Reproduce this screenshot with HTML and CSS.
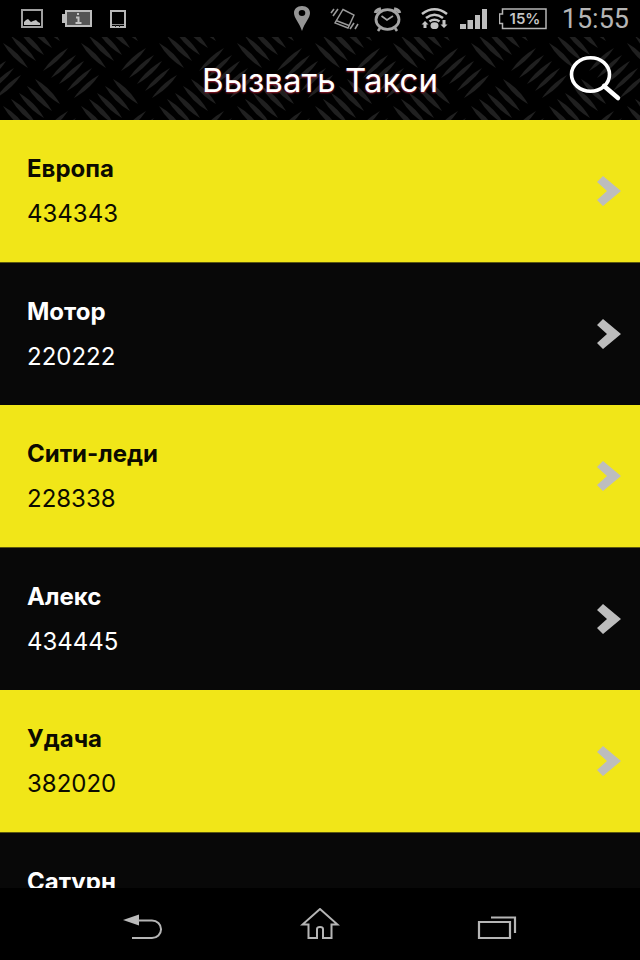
FILE: index.html
```html
<!DOCTYPE html>
<html lang="ru">
<head>
  <meta charset="UTF-8" />
  <meta name="viewport" content="width=device-width, initial-scale=1" />
  <title>Вызвать Такси</title>
  <link rel="stylesheet" href="styles.css">
</head>
<body>

  <div class="status-bar">
    <div class="status-left">
      <svg width="24" height="37" viewBox="0 0 24 37">
        <rect x="2" y="10" width="20" height="17" fill="none" stroke="#a0a0a0" stroke-width="2"/>
        <path d="M4 25v-3l2-2 2-1 3 3 2-1 3-1 2 2 2 1v2z" fill="#c0c0c0"/>
      </svg>
      <svg width="30" height="37" viewBox="0 0 30 37">
        <path d="M0 14h3v-4h27v17H3v-4H0z" fill="#bdbdbd"/>
        <rect x="5" y="12" width="23" height="13" fill="#555"/>
        <path d="M14 17.500h2.500V23M13.500 23h6M15 14h2" fill="none" stroke="#c4c4c4" stroke-width="2"/>
      </svg>
      <svg width="16" height="37" viewBox="0 0 16 37">
        <rect x="1" y="11" width="14" height="16" fill="none" stroke="#b8b8b8" stroke-width="2"/>
        <path d="M2 24.500h12" stroke="#8a8a8a" stroke-width="1"/>
        <path d="M5 26h1M9 26h1" stroke="#222" stroke-width="2"/>
      </svg>
    </div>
    <div class="status-right">
      <svg width="26" height="37" viewBox="0 0 26 37">
        <path fill-rule="evenodd" d="M10 6c5 0 8 3 8 7 0 5-5 9-8 18-3-9-8-13-8-18 0-4 3-7 8-7zm0 4a3.300 3 0 1 0 0 6 3.300 3 0 0 0 0-6z" fill="#959595"/>
      </svg>
      <svg width="31" height="37" viewBox="0 0 31 37" fill="none" stroke="#9a9a9a">
        <path d="M13 9.500l11 5.500-6 13-13-5z" stroke-width="1.400"/>
        <path d="M6 20.500l13 5" stroke-width="1.400"/>
        <path d="M1 13l3-4M3 16l5-7M20 29l4-6M25 29l3-5" stroke-width="1.600"/>
      </svg>
      <svg width="36" height="37" viewBox="0 0 36 37" fill="none" stroke="#a3a3a3">
        <ellipse cx="14.500" cy="19.500" rx="11.500" ry="9.800" stroke-width="2.800"/>
        <path d="M8.500 16l5.500 4 6-4" stroke-width="1.700"/>
        <path d="M2.500 13q.5-3 5.500-4M26.500 13q-.5-3-5.500-4" stroke-width="3.500"/>
        <path d="M7 28l-2 3M22 28l2 3" stroke-width="2.600"/>
      </svg>
      <svg width="27" height="37" viewBox="0 0 27 37" fill="none" stroke="#c4c4c4" stroke-width="2.600">
        <path d="M1 14q12.500-9.500 25 0M5 18q8.500-6.500 17 0M8.500 21.500q5-3.500 10 0"/>
        <ellipse cx="13.500" cy="25.700" rx="4" ry="3.400" fill="#c4c4c4" stroke="none"/>
        <path d="M4 21l3.500 3.500H5.500V28h-3v-3.500H.5zM23 28l-3.500-3.500h2V20h3v4.500h2z" fill="#c4c4c4" stroke="none"/>
      </svg>
      <svg width="27" height="37" viewBox="0 0 27 37" fill="#bdbdbd">
        <path d="M0 24h6v5H0zM7.500 20h5.500v9H7.500zM15 15h5v14h-5zM22 9h5v20h-5z"/>
      </svg>
      <svg width="49" height="37" viewBox="0 0 49 37">
        <path d="M3.500 9H47v19.500H3.500v-5H.5V14h3z" fill="none" stroke="#b5b5b5" stroke-width="1.500"/>
        <text class="battery-text" x="26" y="24" text-anchor="middle">15%</text>
      </svg>
      <span class="clock">15:55</span>
    </div>
  </div>

  <header class="header">
    <svg class="tread" width="100%" height="100%" aria-hidden="true">
      <defs>
        <path id="up" d="M0 0Q9 -14 25 -23Q16 -9 0 0z"/>
        <path id="down" d="M0 0Q16 9 25 25Q9 16 0 0z"/>
        <g id="plate">
          <use href="#up" x="43" y="34"/>
          <use href="#up" x="51" y="41"/>
          <use href="#up" x="59" y="47"/>
          <use href="#up" x="67" y="54"/>
          <use href="#up" x="74" y="61"/>
          <use href="#down" x="35" y="42"/>
          <use href="#down" x="27" y="49"/>
          <use href="#down" x="19" y="56"/>
          <use href="#down" x="11" y="62"/>
          <use href="#down" x="3" y="69"/>
        </g>
        <pattern id="metal" width="78" height="63" patternUnits="userSpaceOnUse">
          <use href="#plate"/>
          <use href="#plate" x="-78"/>
          <use href="#plate" y="-63"/>
          <use href="#plate" x="-78" y="-63"/>
        </pattern>
      </defs>
      <rect width="100%" height="100%" fill="url(#metal)"/>
    </svg>
    <h1>Вызвать Такси</h1>
    <button type="button" class="search" aria-label="Поиск">
      <svg width="54" height="48" viewBox="0 0 54 48" fill="none" stroke="#fff">
        <ellipse cx="22.500" cy="19.500" rx="19" ry="16.800" stroke-width="3.600"/>
        <path d="M36 31l14 12" stroke-width="4.500" stroke-linecap="round"/>
      </svg>
    </button>
  </header>

  <main class="list">
    <a class="row" href="tel:434343">
      <span class="info"><b>Европа</b><span>434343</span></span>
      <svg class="arrow" width="26" height="30" viewBox="0 0 26 30"><path d="M1 6L7 0l18 15L7 30l-6-6 10-9z"/></svg>
    </a>
    <a class="row dark" href="tel:220222">
      <span class="info"><b>Мотор</b><span>220222</span></span>
      <svg class="arrow" width="26" height="30" viewBox="0 0 26 30"><path d="M1 6L7 0l18 15L7 30l-6-6 10-9z"/></svg>
    </a>
    <a class="row" href="tel:228338">
      <span class="info"><b>Сити-леди</b><span>228338</span></span>
      <svg class="arrow" width="26" height="30" viewBox="0 0 26 30"><path d="M1 6L7 0l18 15L7 30l-6-6 10-9z"/></svg>
    </a>
    <a class="row dark" href="tel:434445">
      <span class="info"><b>Алекс</b><span>434445</span></span>
      <svg class="arrow" width="26" height="30" viewBox="0 0 26 30"><path d="M1 6L7 0l18 15L7 30l-6-6 10-9z"/></svg>
    </a>
    <a class="row" href="tel:382020">
      <span class="info"><b>Удача</b><span>382020</span></span>
      <svg class="arrow" width="26" height="30" viewBox="0 0 26 30"><path d="M1 6L7 0l18 15L7 30l-6-6 10-9z"/></svg>
    </a>
    <a class="row dark" href="#">
      <span class="info"><b>Сатурн</b></span>
    </a>
  </main>

  <nav class="nav-bar">
    <button type="button" aria-label="Назад">
      <svg width="40" height="32" viewBox="0 0 40 32">
        <path d="M0 12l16-5.500v11z" fill="#bbb"/>
        <path d="M15 12.500h14a9 8.700 0 0 1 0 17.500H9" fill="none" stroke="#b5b5b5" stroke-width="2"/>
      </svg>
    </button>
    <button type="button" aria-label="Домой">
      <svg width="40" height="32" viewBox="0 0 40 32">
        <path d="M20 1L2.500 16.500h6V30h8.500v-9q0-2 3-2t3 2v9h8.500V16.500h6z" fill="none" stroke="#b5b5b5" stroke-width="2"/>
      </svg>
    </button>
    <button type="button" aria-label="Недавние">
      <svg width="40" height="32" viewBox="0 0 40 32">
        <path d="M2 14h31v16H2zM14 9.500h24V25" fill="none" stroke="#b5b5b5" stroke-width="2.200"/>
      </svg>
    </button>
  </nav>

</body>
</html>
```
FILE: styles.css
```css
* {
  box-sizing: border-box;
}
body {
  margin: 0;
  height: 100vh;
  display: flex;
  flex-direction: column;
  background-color: #000;
  color: #fff;
  font-family: Inter, Roboto, sans-serif;
}
svg {
  display: block;
  flex: none;
}
button {
  border: 0;
  padding: 0;
  background: none;
  cursor: pointer;
}

/* status bar */
.status-bar {
  flex: none;
  display: flex;
  justify-content: space-between;
  height: 37px;
  padding: 0 11px 0 20px;
}
.status-left {
  display: flex;
  gap: 18px;
}
.status-right {
  display: flex;
  gap: 12px;
}
.battery-text {
  font-size: 15px;
  font-weight: 600;
  fill: #c4c4c4;
}
.clock {
  width: 69px;
  font-family: Roboto, sans-serif;
  font-size: 27px;
  line-height: 39px;
  text-align: right;
  color: #b5b5b5;
}

/* header */
.header {
  position: relative;
  flex: none;
  display: grid;
  grid-template-columns: 1fr auto 1fr;
  align-items: center;
  height: 83px;
  padding: 0 18px;
}
.tread {
  position: absolute;
  top: 0;
  left: 0;
  fill: #202020;
}
h1 {
  position: relative;
  grid-column: 2;
  margin: 0;
  padding-top: 2px;
  font-size: 33px;
  font-weight: 400;
  line-height: 36px;
  text-shadow: 0 1px 2px #a02030;
}
.search {
  position: relative;
  justify-self: end;
}

/* taxi list */
.list {
  flex: 1;
  min-height: 0;
  overflow: hidden;
}
.row {
  display: flex;
  justify-content: space-between;
  align-items: center;
  padding: 26px 18px 26px 27px;
  background-color: #f1e618;
  color: #0c0b00;
  text-decoration: none;
}
.row.dark {
  border-top: 1px solid #5c580f;
  background-color: #080808;
  color: #fff;
}
.info {
  display: flex;
  flex-direction: column;
  font-size: 24px;
  line-height: 45px;
}
.info b {
  font-weight: 700;
}
.info span {
  padding-top: 1px;
  line-height: 44px;
}
.arrow {
  fill: #bdbdbd;
}

/* navigation bar */
.nav-bar {
  flex: none;
  display: flex;
  height: 72px;
  padding: 0 54px;
}
.nav-bar button {
  flex: 1;
  display: flex;
  justify-content: center;
  align-items: center;
}
```
